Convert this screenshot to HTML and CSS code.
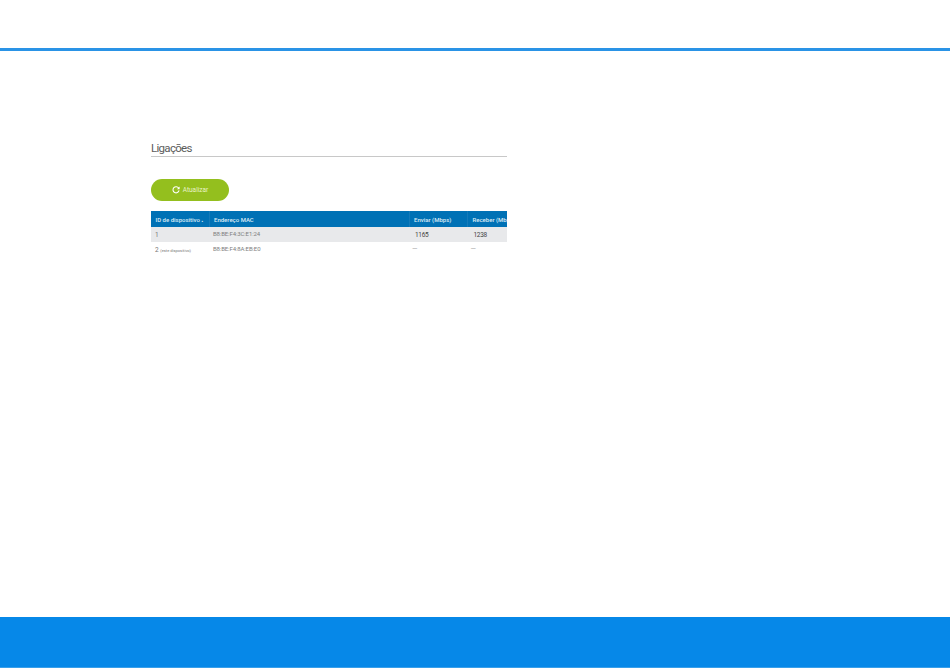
FILE: index.html
```html
<!DOCTYPE html>
<html lang="pt">
<head>
<meta charset="utf-8">
<title>Ligações</title>
<link rel="stylesheet" href="styles.css">
</head>
<body>
<div class="page">
  <header class="topbar"></header>
  <main class="main">
    <section class="panel">
      <h1 class="title">Ligações</h1>
      <button class="refresh" type="button">
        <svg class="refresh-icon" viewBox="0 0 12 12" width="8" height="8" aria-hidden="true">
          <path d="M10 3.2A4.6 4.6 0 1 0 10.6 6.6" fill="none" stroke="#fff" stroke-width="1.6"/>
          <path d="M11.4 0.8V4.8H7.4Z" fill="#fff"/>
        </svg>
        <span>Atualizar</span>
      </button>
      <div class="table-clip">
        <table class="table">
          <colgroup>
            <col class="c1"><col class="c2"><col class="c3"><col class="c4">
          </colgroup>
          <thead>
            <tr>
              <th>ID de dispositivo<span class="sort">▲</span></th>
              <th>Endereço MAC</th>
              <th>Enviar (Mbps)</th>
              <th>Receber (Mbps)</th>
            </tr>
          </thead>
          <tbody>
            <tr class="odd">
              <td>1</td>
              <td class="mac">B8:BE:F4:3C:E1:24</td>
              <td class="num">1165</td>
              <td class="num">1238</td>
            </tr>
            <tr class="plain">
              <td>2 <span class="note">(este dispositivo)</span></td>
              <td class="mac">B8:BE:F4:8A:EB:E0</td>
              <td class="dash">—</td>
              <td class="dash">—</td>
            </tr>
          </tbody>
        </table>
      </div>
    </section>
  </main>
  <footer class="footer"></footer>
</div>
</body>
</html>
```

FILE: styles.css
```css
html, body {
  margin: 0;
  padding: 0;
  background: #fff;
}

.page {
  display: flex;
  flex-direction: column;
  height: 668px;
  overflow: hidden;
  font-family: Roboto, "Liberation Sans", sans-serif;
}

.topbar {
  flex: none;
  height: 48px;
  border-bottom: 3px solid #2a93e6;
}

.main {
  flex: 1;
  padding: 89px 0 0 151px;
}

.panel {
  width: 356px;
}

.title {
  margin: 0;
  height: 16px;
  border-bottom: 1px solid #c8c8c8;
  font-size: 11.5px;
  line-height: 16px;
  font-weight: 400;
  letter-spacing: -0.7px;
  color: #5c5c5c;
}

.refresh {
  display: flex;
  align-items: center;
  justify-content: center;
  gap: 3px;
  width: 78px;
  height: 22px;
  margin: 22px 0 10px;
  padding: 0;
  border: 0;
  border-radius: 11px;
  background: #94bf1e;
  color: #e9f3c9;
  font-family: inherit;
  font-size: 6.5px;
}

.refresh-icon {
  display: block;
}

.table-clip {
  overflow: hidden;
}

.table {
  width: 370px;
  table-layout: fixed;
  border-collapse: collapse;
  font-size: 6.5px;
}

.c1 { width: 58px; }
.c2 { width: 200px; }
.c3 { width: 58.5px; }
.c4 { width: 53.5px; }

.table th {
  height: 16px;
  padding: 0 0 0 4.5px;
  background: #0071b5;
  border-left: 1px solid #157ab9;
  color: #dcebf5;
  font-size: 6px;
  font-weight: 500;
  text-align: left;
  white-space: nowrap;
}

.table th:first-child {
  border-left: 0;
}

.sort {
  font-size: 2.5px;
  margin-left: 1px;
}

.table td {
  box-sizing: border-box;
  height: 15px;
  padding: 0 0 0 4px;
  color: #777;
  white-space: nowrap;
}

.odd td {
  background: #e8e9eb;
}

.table .mac {
  color: #808080;
  font-size: 6px;
  letter-spacing: -0.12px;
}

.odd .mac {
  padding-bottom: 2px;
}

.plain .mac {
  padding-bottom: 2px;
}

.table .num {
  padding-left: 6px;
  letter-spacing: -0.3px;
  color: #444;
}

.table .dash {
  padding-left: 3px;
  padding-bottom: 2px;
  font-size: 7px;
  color: #aaa;
}

.note {
  font-size: 4px;
}

.footer {
  flex: none;
  height: 50px;
  border-bottom: 1px solid #3aa0ea;
  background: #0688e8;
}
```
